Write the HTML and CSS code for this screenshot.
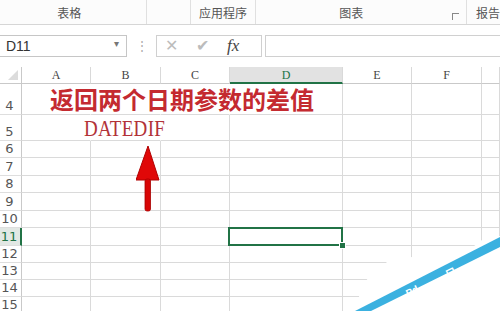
FILE: index.html
```html
<!DOCTYPE html>
<html lang="zh-CN">
<head>
    <meta charset="UTF-8">
    <title>DATEDIF</title>
    <link rel="stylesheet" href="styles.css">
</head>
<body>
    <div class="ribbon">
        <div class="group g1">表格</div>
        <div class="group g2"></div>
        <div class="group g3">应用程序</div>
        <div class="group g4">图表<span class="launcher"></span></div>
        <div class="group g5">报告</div>
    </div>

    <div class="fbar">
        <div class="namebox">D11<span class="drop">&#9662;</span></div>
        <div class="grip">&#8942;</div>
        <div class="fbtns">
            <span class="btn">&#10005;</span>
            <span class="btn">&#10004;</span>
            <span class="fx">fx</span>
        </div>
        <div class="finput"></div>
    </div>

    <div class="sheet">
        <div class="corner"></div>
        <div class="ch">A</div><div class="ch">B</div><div class="ch">C</div><div class="ch sel">D</div><div class="ch">E</div><div class="ch">F</div><div class="ch"></div>

        <div class="rh">4</div>
        <div class="c flow"><span class="title">返回两个日期参数的差值</span></div><div class="c flow"></div><div class="c flow"></div><div class="c"></div><div class="c"></div><div class="c"></div><div class="c"></div>

        <div class="rh">5</div>
        <div class="c flow"></div><div class="c flow center"><span class="func">DATEDIF</span></div><div class="c"></div><div class="c"></div><div class="c"></div><div class="c"></div><div class="c"></div>

        <div class="rh">6</div>
        <div class="c"></div><div class="c"></div><div class="c"></div><div class="c"></div><div class="c"></div><div class="c"></div><div class="c"></div>
        <div class="rh">7</div>
        <div class="c"></div><div class="c"></div><div class="c"></div><div class="c"></div><div class="c"></div><div class="c"></div><div class="c"></div>
        <div class="rh">8</div>
        <div class="c"></div><div class="c"></div><div class="c"></div><div class="c"></div><div class="c"></div><div class="c"></div><div class="c"></div>
        <div class="rh">9</div>
        <div class="c"></div><div class="c"></div><div class="c"></div><div class="c"></div><div class="c"></div><div class="c"></div><div class="c"></div>
        <div class="rh">10</div>
        <div class="c"></div><div class="c"></div><div class="c"></div><div class="c"></div><div class="c"></div><div class="c"></div><div class="c"></div>
        <div class="rh sel">11</div>
        <div class="c"></div><div class="c"></div><div class="c"></div><div class="c active"></div><div class="c"></div><div class="c"></div><div class="c"></div>
        <div class="rh">12</div>
        <div class="c"></div><div class="c"></div><div class="c"></div><div class="c"></div><div class="c"></div><div class="c"></div><div class="c"></div>
        <div class="rh">13</div>
        <div class="c"></div><div class="c"></div><div class="c"></div><div class="c"></div><div class="c"></div><div class="c"></div><div class="c"></div>
        <div class="rh">14</div>
        <div class="c"></div><div class="c"></div><div class="c"></div><div class="c"></div><div class="c"></div><div class="c"></div><div class="c"></div>
        <div class="rh">15</div>
        <div class="c"></div><div class="c"></div><div class="c"></div><div class="c"></div><div class="c"></div><div class="c"></div><div class="c"></div>
    </div>

    <!-- 红色箭头 -->
    <svg class="arrow" width="30" height="70" viewBox="0 0 30 70">
        <polygon points="12,0 23,34 0,34" fill="#e00808" stroke="#b00000" stroke-width="1"/>
        <rect x="9" y="33" width="5.5" height="32" rx="2" fill="#d80606" stroke="#a80000" stroke-width="0.8"/>
    </svg>

    <!-- 水印 -->
    <svg class="mark" width="150" height="80" viewBox="0 0 150 80">
        <polygon points="7,80 10,59 18,47 37,31 62,26 120,18 132,9 150,5 150,80" fill="#ffffff"/>
        <polygon points="5,80 150,6 150,16 21,80" fill="#3bb1e0"/>
        <text x="58" y="66" transform="rotate(-27 58 66)" class="mark-text">Pd</text>
        <text x="98" y="47" transform="rotate(-27 98 47)" class="mark-text">口</text>
    </svg>
</body>
</html>
```

FILE: styles.css
```css
body {
    margin: 0;
    width: 500px;
    height: 311px;
    overflow: hidden;
    background: #fff;
    position: relative;
    font-family: "Liberation Sans", "Noto Sans CJK SC", sans-serif;
}
.ribbon {
    display: flex;
    height: 24px;
    border-bottom: 1px solid #d6d6d6;
    background: #fcfcfc;
}
.group {
    box-sizing: border-box;
    border-right: 1px solid #e0e0e0;
    display: flex;
    align-items: flex-end;
    justify-content: center;
    padding-bottom: 4px;
    font-size: 12px;
    color: #555;
    font-family: "Noto Sans CJK SC", sans-serif;
    line-height: 14px;
    white-space: nowrap;
}
.g1 { width: 147px; padding-right: 7px; }
.g2 { width: 44px; }
.g3 { width: 66px; }
.g4 { width: 211px; padding-right: 20px; position: relative; }
.g5 { flex: 1; border-right: none; justify-content: flex-start; padding-left: 9px; }
.launcher {
    position: absolute;
    right: 7px;
    bottom: 4px;
    width: 6px;
    height: 6px;
    border-left: 1px solid #888;
    border-top: 1px solid #888;
}
.fbar {
    display: flex;
    align-items: center;
    height: 22px;
    margin-top: 10px;
    margin-bottom: 10px;
}
.namebox {
    box-sizing: border-box;
    width: 128px;
    height: 22px;
    margin-left: -1px;
    border: 1px solid #c6c6c6;
    display: flex;
    align-items: center;
    padding-left: 6px;
    font-size: 14px;
    color: #333;
    position: relative;
}
.drop {
    position: absolute;
    right: 7px;
    top: 2px;
    font-size: 10px;
    color: #777;
}
.grip {
    width: 29px;
    text-align: center;
    color: #aaa;
    font-size: 12px;
}
.fbtns {
    box-sizing: border-box;
    width: 106px;
    height: 22px;
    border: 1px solid #d0d0d0;
    display: flex;
    align-items: center;
    gap: 18px;
    padding-left: 8px;
}
.btn {
    color: #bcbcbc;
    font-size: 16px;
    line-height: 20px;
}
.fx {
    font-family: "Liberation Serif", serif;
    font-style: italic;
    font-size: 17px;
    color: #444;
}
.finput {
    flex: 1;
    box-sizing: border-box;
    height: 22px;
    margin-left: 3px;
    border: 1px solid #d0d0d0;
    border-right: none;
}
.sheet {
    display: grid;
    grid-template-columns: 22px 69px 70px 69px 113px 69px 70px 18px;
    grid-template-rows: 17px 31px 26px 17px 18px 17px 18px 17px 18px 17px 17px 17px 17px;
}
.sheet > div {
    box-sizing: border-box;
}
.corner {
    border-right: 1px solid #c9c9c9;
    border-bottom: 1px solid #c9c9c9;
    position: relative;
}
.corner::after {
    content: "";
    position: absolute;
    right: 3px;
    bottom: 3px;
    border-left: 10px solid transparent;
    border-bottom: 10px solid #dcdcdc;
}
.ch {
    border-right: 1px solid #d9d9d9;
    border-bottom: 1px solid #c9c9c9;
    text-align: center;
    font-family: "Liberation Serif", serif;
    font-size: 12px;
    line-height: 17px;
    color: #444;
}
.ch.sel {
    background: #e2e2e2;
    border-bottom: 2px solid #217346;
    color: #217346;
}
.rh {
    border-right: 1px solid #c9c9c9;
    border-bottom: 1px solid #dedede;
    display: flex;
    align-items: flex-end;
    justify-content: center;
    padding-bottom: 2px;
    padding-right: 2px;
    font-family: "DejaVu Sans", sans-serif;
    font-size: 13px;
    line-height: 13px;
    color: #555;
}
.rh.sel {
    background: #e2e8e4;
    border-right: 2px solid #217346;
    color: #217346;
}
.c {
    border-right: 1px solid #dadada;
    border-bottom: 1px solid #dadada;
    white-space: nowrap;
    display: flex;
    align-items: center;
}
.c.flow {
    border-right-color: transparent;
}
.c.center {
    justify-content: center;
}
.title {
    padding-left: 28px;
    font-family: "Noto Sans CJK SC", sans-serif;
    font-weight: 700;
    font-size: 24px;
    line-height: 28px;
    color: #c42a30;
}
.func {
    font-family: "Liberation Serif", serif;
    font-size: 19px;
    letter-spacing: 0.3px;
    color: #b23238;
    transform: scaleY(1.25);
    margin-left: -2px;
}
.active {
    position: relative;
}
.active::after {
    content: "";
    position: absolute;
    left: -2px;
    top: -1px;
    right: -1px;
    bottom: -1px;
    border: 2px solid #217346;
}
.active::before {
    content: "";
    position: absolute;
    right: -4px;
    bottom: -4px;
    width: 5px;
    height: 5px;
    background: #217346;
    border: 1px solid #fff;
    z-index: 1;
}
.arrow {
    position: absolute;
    left: 136px;
    top: 146px;
}
.mark {
    position: absolute;
    right: 0;
    bottom: 0;
}
.mark-text {
    fill: #fff;
    font-family: "Liberation Sans", "Noto Sans CJK SC", sans-serif;
    font-weight: 700;
    font-size: 10px;
}
```
